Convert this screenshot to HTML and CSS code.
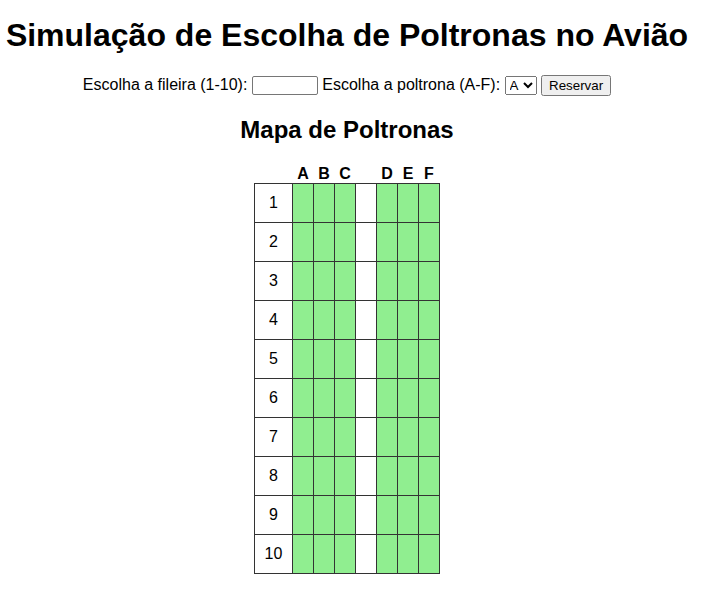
FILE: index.html
```html
<!DOCTYPE html>
<html lang="pt-BR">
<head>
<meta charset="utf-8">
<title>Simulação de Escolha de Poltronas no Avião</title>
<link rel="stylesheet" href="styles.css">
</head>
<body>
<h1 class="title">Simulação de Escolha de Poltronas no Avião</h1>
<div class="controls">
  <label for="fileira">Escolha a fileira (1-10):</label>
  <input type="number" id="fileira" class="row-input" min="1" max="10">
  <label for="poltrona">Escolha a poltrona (A-F):</label>
  <select id="poltrona" class="seat-select">
    <option>A</option><option>B</option><option>C</option>
    <option>D</option><option>E</option><option>F</option>
  </select>
  <button type="button" class="reserve-btn">Reservar</button>
</div>
<h2 class="map-title">Mapa de Poltronas</h2>
<table class="seat-map">
  <thead>
    <tr><th></th><th>A</th><th>B</th><th>C</th><th></th><th>D</th><th>E</th><th>F</th></tr>
  </thead>
  <tbody>
    <tr><td class="num">1</td><td class="seat"></td><td class="seat"></td><td class="seat"></td><td class="aisle"></td><td class="seat"></td><td class="seat"></td><td class="seat"></td></tr>
    <tr><td class="num">2</td><td class="seat"></td><td class="seat"></td><td class="seat"></td><td class="aisle"></td><td class="seat"></td><td class="seat"></td><td class="seat"></td></tr>
    <tr><td class="num">3</td><td class="seat"></td><td class="seat"></td><td class="seat"></td><td class="aisle"></td><td class="seat"></td><td class="seat"></td><td class="seat"></td></tr>
    <tr><td class="num">4</td><td class="seat"></td><td class="seat"></td><td class="seat"></td><td class="aisle"></td><td class="seat"></td><td class="seat"></td><td class="seat"></td></tr>
    <tr><td class="num">5</td><td class="seat"></td><td class="seat"></td><td class="seat"></td><td class="aisle"></td><td class="seat"></td><td class="seat"></td><td class="seat"></td></tr>
    <tr><td class="num">6</td><td class="seat"></td><td class="seat"></td><td class="seat"></td><td class="aisle"></td><td class="seat"></td><td class="seat"></td><td class="seat"></td></tr>
    <tr><td class="num">7</td><td class="seat"></td><td class="seat"></td><td class="seat"></td><td class="aisle"></td><td class="seat"></td><td class="seat"></td><td class="seat"></td></tr>
    <tr><td class="num">8</td><td class="seat"></td><td class="seat"></td><td class="seat"></td><td class="aisle"></td><td class="seat"></td><td class="seat"></td><td class="seat"></td></tr>
    <tr><td class="num">9</td><td class="seat"></td><td class="seat"></td><td class="seat"></td><td class="aisle"></td><td class="seat"></td><td class="seat"></td><td class="seat"></td></tr>
    <tr><td class="num">10</td><td class="seat"></td><td class="seat"></td><td class="seat"></td><td class="aisle"></td><td class="seat"></td><td class="seat"></td><td class="seat"></td></tr>
  </tbody>
</table>
</body>
</html>
```
FILE: styles.css
```css
html, body {
  background: #fff;
}
body {
  margin: 8px 12px 8px 4px;
  font-family: "Liberation Sans", Arial, sans-serif;
  color: #000;
  text-align: center;
}
.title {
  font-size: 32px;
  font-weight: bold;
  white-space: nowrap;
  margin: 9px 0 21px;
}
.controls {
  font-size: 16px;
}
.row-input {
  width: 60px;
  font-family: "Liberation Sans", Arial, sans-serif;
  font-size: 13.33px;
  padding: 1px 2px;
  border: 1px solid #767676;
  border-radius: 2px;
  -moz-appearance: textfield;
  appearance: textfield;
}
.row-input::-webkit-outer-spin-button,
.row-input::-webkit-inner-spin-button {
  -webkit-appearance: none;
  margin: 0;
}
.seat-select {
  font-family: "Liberation Sans", Arial, sans-serif;
  font-size: 13.33px;
}
.reserve-btn {
  font-family: "Liberation Sans", Arial, sans-serif;
  font-size: 13.33px;
}
.map-title {
  font-size: 24px;
  font-weight: bold;
  margin: 20px 0 20px;
}
.seat-map {
  margin: 0 auto;
  border-collapse: collapse;
}
.seat-map th {
  font-size: 16px;
  font-weight: bold;
  padding: 0;
  height: 19px;
  vertical-align: middle;
}
.seat-map td {
  padding: 0;
  height: 38px;
  border: 1px solid #333;
  font-size: 16px;
}
.seat-map .num {
  width: 37px;
  background: #fff;
}
.seat-map .seat {
  width: 20px;
  background: #90ee90;
}
.seat-map .aisle {
  width: 20px;
  background: #fff;
}
```
